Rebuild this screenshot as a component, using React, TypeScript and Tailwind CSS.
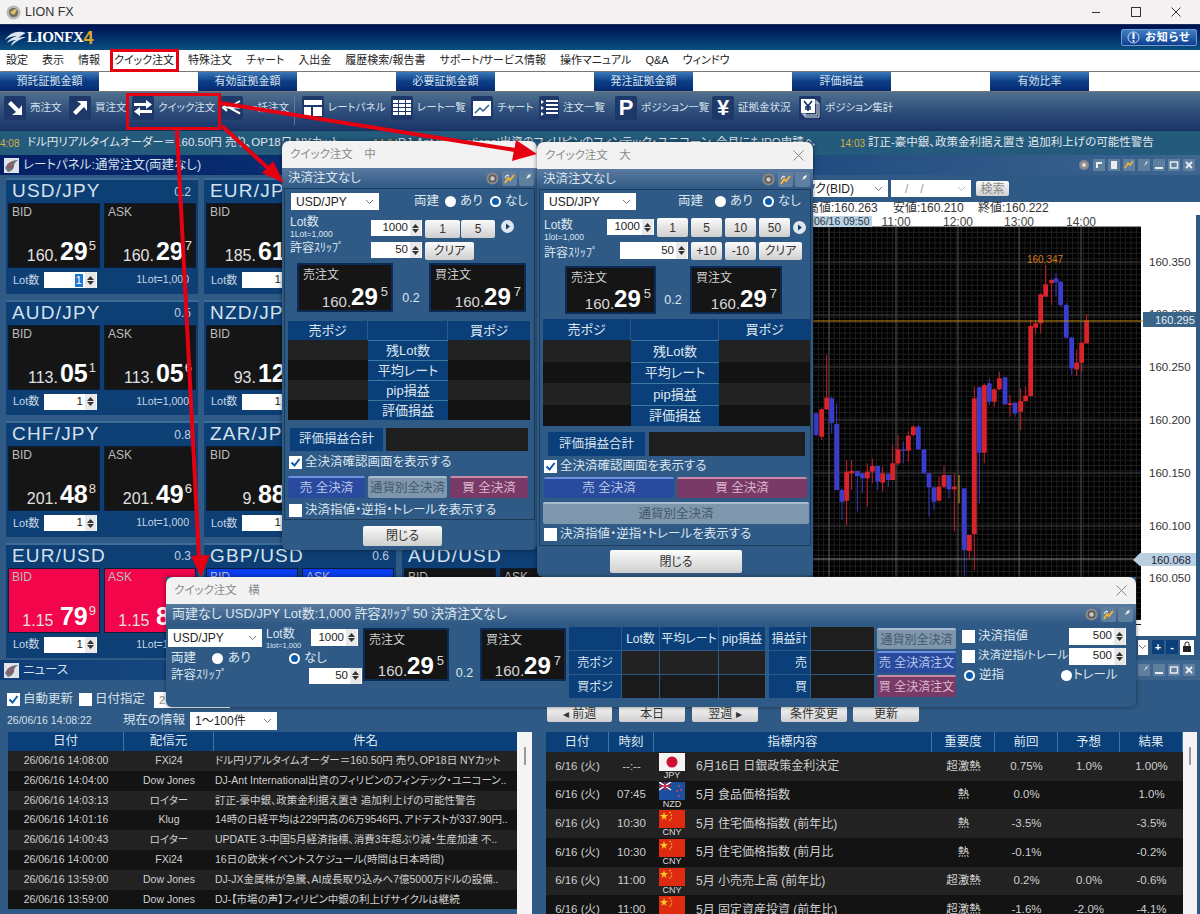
import React from 'react';

// candles: x, body top, body bottom, wick top, wick bottom (zoomed chart coords), red?
const candles: [number, number, number, number, number, boolean][] = [
  [18, 730, 795, 730, 800, false], [35, 718, 800, 715, 810, true], [50, 683, 718, 555, 720, true],
  [65, 685, 758, 680, 790, false], [80, 762, 960, 700, 960, false], [96, 960, 995, 955, 1050, false],
  [110, 905, 992, 870, 1065, true], [125, 903, 910, 870, 960, true], [142, 903, 918, 905, 1025, false],
  [157, 910, 925, 910, 970, false], [172, 905, 925, 880, 1010, true], [187, 888, 905, 865, 940, true],
  [203, 888, 935, 888, 960, false], [218, 910, 938, 890, 965, true], [235, 912, 930, 910, 950, false],
  [248, 880, 930, 825, 930, true], [264, 838, 880, 795, 885, true], [280, 838, 842, 815, 880, false],
  [295, 797, 842, 785, 875, true], [310, 770, 795, 765, 800, true], [325, 770, 838, 765, 840, false],
  [342, 838, 910, 838, 910, false], [357, 910, 952, 910, 1040, false], [372, 952, 995, 950, 1020, false],
  [387, 950, 992, 920, 995, true], [402, 915, 950, 888, 955, true], [417, 915, 958, 915, 985, false],
  [433, 950, 958, 910, 1085, true], [463, 955, 1140, 955, 1220, false], [478, 1095, 1143, 1095, 1165, true],
  [493, 685, 1092, 650, 1200, true], [508, 652, 848, 650, 1000, false], [523, 645, 848, 640, 880, true],
  [538, 640, 695, 625, 705, false], [553, 658, 695, 655, 710, true], [568, 625, 658, 605, 660, true],
  [585, 622, 703, 620, 705, false], [600, 700, 705, 675, 740, true], [615, 698, 730, 698, 740, false],
  [632, 693, 725, 655, 780, true], [647, 677, 693, 650, 695, true], [662, 468, 678, 450, 680, true],
  [677, 460, 473, 450, 490, true], [692, 373, 460, 370, 490, true], [707, 343, 380, 285, 380, true],
  [725, 330, 340, 325, 405, true], [738, 325, 337, 310, 380, false], [752, 335, 405, 335, 410, false],
  [769, 405, 503, 400, 505, false], [785, 503, 595, 500, 615, false], [800, 578, 598, 540, 618, true],
  [815, 518, 578, 518, 605, true], [830, 452, 520, 432, 520, true],
];

const px = (z: number) => 810 + z / 3;
const py = (z: number) => 170 + z / 3;

function Chart() {
  const minorX = Array.from({ length: 62 }, (_, i) => 813 + i * 5.3);
  const minorY = Array.from({ length: 76 }, (_, i) => 227 + i * 5.3);
  const majorY = [262, 315, 367, 420, 473, 526, 578];
  const majorX = [829, 896, 958, 1019, 1081];
  const labels: [string, number][] = [
    ['160.350', 266], ['160.300', 318], ['160.250', 371], ['160.200', 424], ['160.150', 477], ['160.100', 530], ['160.050', 582],
  ];
  return (
    <svg width="383" height="421" viewBox="813 215 383 421" className="block shrink-0">
      <rect x="813" y="215" width="383" height="421" fill="#fff" />
      <rect x="813" y="227" width="328" height="393" fill="#000" />
      {minorX.map((x) => <line key={x} x1={x} x2={x} y1="227" y2="620" stroke="#1f1f1f" />)}
      {minorY.map((y) => <line key={y} x1="813" x2="1141" y1={y} y2={y} stroke="#1f1f1f" />)}
      {majorX.map((x) => <line key={x} x1={x} x2={x} y1="227" y2="620" stroke="#555" />)}
      {majorY.map((y) => <line key={y} x1="813" x2="1141" y1={y} y2={y} stroke="#444" />)}
      <rect x="813" y="216" width="59" height="11" fill="#b7d4e8" />
      <text x="814" y="225" fontSize="10.5" fill="#333">06/16 09:50</text>
      {[['11:00', 896], ['12:00', 958], ['13:00', 1019], ['14:00', 1081]].map(([t, x]) => (
        <text key={t} x={x} y="226" fontSize="12" fill="#444" textAnchor="middle">{t}</text>
      ))}
      {candles.map(([x, t, b, wt, wb, red]) => (
        <g key={x}>
          <line x1={px(x)} x2={px(x)} y1={py(wt)} y2={py(wb)} stroke={red ? '#c8202a' : '#3a3cc0'} />
          <rect x={px(x) - 2.4} y={py(t)} width="4.8" height={Math.max((b - t) / 3, 1.5)} fill={red ? '#d8232a' : '#3a3ccc'} />
        </g>
      ))}
      <line x1={px(447)} x2={px(447)} y1={py(915)} y2={py(1000)} stroke="#c8a020" />
      <line x1="813" x2="1143" y1="321" y2="321" stroke="#c98a10" />
      <line x1="813" x2="1135" y1="559" y2="559" stroke="#888" />
      <text x={px(705)} y="263" fontSize="10" fill="#d9791a" textAnchor="middle">160.347</text>
      {labels.map(([t, y]) => <text key={t} x="1149" y={y} fontSize="11.5" fill="#333">{t}</text>)}
      <rect x="1143" y="312" width="53" height="15" fill="#3a6488" />
      <text x="1155" y="324" fontSize="11" fill="#e6eef4">160.295</text>
      <path d="M1133 560 L1140 553 H1196 V566 H1140 Z" fill="#b9d0e2" />
      <text x="1151" y="563.5" fontSize="11" fill="#223">160.068</text>
    </svg>
  );
}

function Spin({ v, cls, picked }: { v: string; cls: string; picked?: boolean }) {
  return (
    <div className={`flex bg-white items-center justify-end text-[11.5px] text-[#222] shrink-0 ${cls}`}>
      <span className={picked ? 'mr-[2px] px-[1px] bg-[#1a78d8] text-white leading-[13px]' : 'pr-[2px]'}>{v}</span>
      <div className="w-[11px] h-full flex flex-col items-center justify-center gap-[1px] bg-[#e8e8e8] mr-[1px]">
        <svg width="7" height="4" viewBox="0 0 7 4"><path d="M3.5 0 7 4H0z" fill="#333" /></svg>
        <svg width="7" height="4" viewBox="0 0 7 4"><path d="M0 0h7L3.5 4z" fill="#333" /></svg>
      </div>
    </div>
  );
}

function Select({ v, cls }: { v: string; cls: string }) {
  return (
    <div className={`flex items-center justify-between bg-white text-[12px] text-[#222] pl-[5px] pr-[5px] shrink-0 ${cls}`}>
      <span className="whitespace-nowrap">{v}</span>
      <svg width="9" height="6" viewBox="0 0 9 6"><path d="M1 1l3.5 3.5L8 1" fill="none" stroke="#777" /></svg>
    </div>
  );
}

function Btn({ children, cls }: { children: React.ReactNode; cls: string }) {
  return (
    <div className={`flex items-center justify-center rounded-[2px] bg-gradient-to-b from-[#fbfbfb] to-[#cfcfcf] text-[#333] text-[12px] shrink-0 ${cls}`}>
      {children}
    </div>
  );
}

function Radio({ on, cls = '' }: { on?: boolean; cls?: string }) {
  return (
    <span className={`inline-flex w-[11px] h-[11px] rounded-full bg-white items-center justify-center shrink-0 ${cls}`}>
      {on && <span className="w-[7px] h-[7px] rounded-full bg-[#0a5cb0]" />}
    </span>
  );
}

function Check({ on }: { on?: boolean }) {
  return (
    <span className="inline-flex w-[13px] h-[13px] bg-white items-center justify-center shrink-0">
      {on && (
        <svg width="11" height="11" viewBox="0 0 11 11"><path d="M1.5 5.5l3 3 5-6.5" fill="none" stroke="#0a5cb0" strokeWidth="2" /></svg>
      )}
    </span>
  );
}

function Play() {
  return (
    <svg width="13" height="13" viewBox="0 0 13 13" className="shrink-0">
      <circle cx="6.5" cy="6.5" r="6.5" fill="#dfe6ee" />
      <path d="M5 3.5l4 3-4 3z" fill="#0a3f7a" />
    </svg>
  );
}

function DlgIcons() {
  return (
    <div className="flex gap-[2px]">
      <svg width="15" height="15" viewBox="0 0 15 15"><circle cx="7.5" cy="7.5" r="6" fill="#8a8a8a" /><circle cx="7.5" cy="7.5" r="4" fill="#5c5c5c" /><circle cx="7.5" cy="7.5" r="2.2" fill="#c8c8c8" /></svg>
      <svg width="15" height="15" viewBox="0 0 15 15"><rect width="15" height="15" rx="2" fill="#5f7f9f" /><path d="M3 12l3-5 2 2 4-5" fill="none" stroke="#f2b23a" strokeWidth="2" /><path d="M3 7l2-3 2 1" fill="none" stroke="#fff" /></svg>
      <svg width="15" height="15" viewBox="0 0 15 15"><rect width="15" height="15" rx="2" fill="#5f7f9f" /><path d="M3 12l4-4 2-4 3-1-1 3-4 2z" fill="#e8eef4" /></svg>
    </div>
  );
}

function PriceBig({ sup }: { sup: string }) {
  return (
    <div className="flex items-start justify-end leading-none">
      <span className="text-[15px] text-[#d8d8d8] mt-[9px]">160.</span>
      <span className="text-[24px] font-bold text-white">29</span>
      <span className="text-[13px] text-[#d8d8d8] ml-[3px]">{sup}</span>
    </div>
  );
}

function OrderBox({ label, sup, cls }: { label: string; sup: string; cls: string }) {
  return (
    <div className={`flex flex-col justify-between bg-[#151515] border-2 border-[#0b2a55] pl-[4px] pr-[3px] pt-[2px] pb-[1px] shrink-0 ${cls}`}>
      <span className="text-[12px] text-[#cfcfcf] leading-[16px]">{label}</span>
      <PriceBig sup={sup} />
    </div>
  );
}

const posRows = ['残Lot数', '平均レート', 'pip損益', '評価損益'];

function PosTable({ cols, head, row }: { cols: string; head: string; row: string }) {
  return (
    <div className={`grid ${cols} text-[13px] text-[#dfe8f0]`}>
      <div className={`${head} bg-[#0a3f7a] border-r border-[#2f5a85] flex items-center justify-center`}>売ポジ</div>
      <div className={`${head} bg-[#0a3f7a] border-r border-[#2f5a85]`} />
      <div className={`${head} bg-[#0a3f7a] flex items-center justify-center`}>買ポジ</div>
      {posRows.map((t, i) => (
        <React.Fragment key={t}>
          <div className={`${row} ${i % 2 ? 'bg-[#131313]' : 'bg-[#222]'}`} />
          <div className={`${row} bg-[#0a3f7a] border-t border-[#3a7aa0] flex items-center justify-center`}>{t}</div>
          <div className={`${row} ${i % 2 ? 'bg-[#131313]' : 'bg-[#222]'}`} />
        </React.Fragment>
      ))}
    </div>
  );
}

function SettleBtn({ children, tone, cls }: { children: React.ReactNode; tone: 'blue' | 'red' | 'gray'; cls: string }) {
  const t = tone === 'blue'
    ? 'bg-[#2a4a9e] border-[#6f8fe0] text-[#b9c8ec]'
    : tone === 'red'
      ? 'bg-[#7a3a68] border-[#c88aa8] text-[#dcb9cc]'
      : 'bg-[#7e97ad] border-[#a8bccb] text-[#46566a]';
  return <div className={`flex items-center justify-center rounded-[2px] border-t-2 text-[12.5px] shrink-0 ${t} ${cls}`}>{children}</div>;
}

function DialogTitle({ t, close }: { t: string; close?: boolean }) {
  return (
    <div className="flex items-center justify-between h-[27px] bg-[#f2f2f2] rounded-t-[7px] pl-[8px] pr-[9px] text-[11.5px] text-[#8a8a8a] shrink-0">
      <span>{t}</span>
      {close && (
        <svg width="11" height="11" viewBox="0 0 11 11"><path d="M.5.5l10 10M10.5.5l-10 10" stroke="#8a8a8a" /></svg>
      )}
    </div>
  );
}

function DialogMedium() {
  return (
    <div className="absolute left-[282px] top-[141px] w-[255px] h-[409px] flex flex-col rounded-b-[6px] bg-[#2f5a85] text-[#dbe6f0] text-[12.5px] shadow-[0_0_4px_rgba(0,0,0,0.5)]">
      <DialogTitle t="クイック注文　中" />
      <div className="flex items-center justify-between h-[20px] px-[6px] pr-[3px] bg-gradient-to-b from-[#5a7aa0] to-[#2f5a85] shrink-0">
        <span>決済注文なし</span>
        <DlgIcons />
      </div>
      <div className="mx-[2px] h-[332px] border border-[#1d3c5a] flex flex-col px-[4px] pt-[4px]">
        <div className="flex items-center h-[17px]">
          <Select v="USD/JPY" cls="w-[88px] h-[17px] ml-[2px]" />
          <span className="ml-[35px] w-[31px]">両建</span>
          <Radio />
          <span className="ml-[4px] w-[30px]">あり</span>
          <Radio on />
          <span className="ml-[4px]">なし</span>
        </div>
        <div className="flex mt-[10px] h-[38px]">
          <div className="w-[81px] ml-[1px] leading-none -mt-[5px]">
            <div className="text-[12px] leading-[14px]">Lot数</div>
            <div className="text-[8.5px] leading-[10px]">1Lot=1,000</div>
            <div className="text-[12px] leading-[16px] mt-[1px]">許容ｽﾘｯﾌﾟ</div>
          </div>
          <div className="flex flex-col gap-[6px]">
            <div className="flex items-start">
              <Spin v="1000" cls="w-[51px] h-[16px]" />
              <Btn cls="w-[35px] h-[18px] ml-[3px]">1</Btn>
              <Btn cls="w-[34px] h-[18px] ml-[1px]">5</Btn>
              <span className="ml-[6px]"><Play /></span>
            </div>
            <div className="flex items-start -mt-[2px]">
              <Spin v="50" cls="w-[51px] h-[16px]" />
              <Btn cls="w-[49px] h-[18px] ml-[3px]">クリア</Btn>
            </div>
          </div>
        </div>
        <div className="flex items-end mt-[5px] ml-[8px] h-[49px]">
          <OrderBox label="売注文" sup="5" cls="w-[96px] h-[49px]" />
          <span className="w-[36px] text-center text-[12.5px] mb-[4px]">0.2</span>
          <OrderBox label="買注文" sup="7" cls="w-[97px] h-[49px]" />
        </div>
        <div className="mt-[9px] -mx-[1px]">
          <PosTable cols="grid-cols-[80px_80px_82px]" head="h-[19px]" row="h-[20px]" />
        </div>
        <div className="flex mt-[8px] ml-[1px] h-[23px]">
          <div className="w-[93px] bg-[#0a3f7a] flex items-center justify-center">評価損益合計</div>
          <div className="w-[142px] ml-[3px] bg-[#1e1e1e]" />
        </div>
        <div className="flex items-center gap-[3px] mt-[4px] h-[14px]"><Check on /><span>全決済確認画面を表示する</span></div>
        <div className="flex gap-[3px] mt-[7px] -ml-[1px]">
          <SettleBtn tone="blue" cls="w-[77px] h-[22px]">売 全決済</SettleBtn>
          <SettleBtn tone="gray" cls="w-[79px] h-[22px]">通貨別全決済</SettleBtn>
          <SettleBtn tone="red" cls="w-[78px] h-[22px]">買 全決済</SettleBtn>
        </div>
        <div className="flex items-center gap-[3px] mt-[5px] h-[14px]"><Check /><span>決済指値・逆指・トレールを表示する</span></div>
      </div>
      <Btn cls="w-[79px] h-[20px] ml-[81px] mt-[6px]">閉じる</Btn>
    </div>
  );
}

function DialogLarge() {
  return (
    <div className="absolute left-[537px] top-[142px] w-[276px] h-[435px] flex flex-col rounded-b-[6px] bg-[#2f5a85] text-[#dbe6f0] text-[12.5px] shadow-[0_0_4px_rgba(0,0,0,0.5)]">
      <DialogTitle t="クイック注文　大" close />
      <div className="flex items-center justify-between h-[20px] px-[6px] pr-[3px] bg-gradient-to-b from-[#5a7aa0] to-[#2f5a85] shrink-0">
        <span>決済注文なし</span>
        <DlgIcons />
      </div>
      <div className="mx-[2px] h-[357px] border border-[#1d3c5a] flex flex-col px-[4px] pt-[3px]">
        <div className="flex items-center h-[17px]">
          <Select v="USD/JPY" cls="w-[92px] h-[17px]" />
          <span className="ml-[42px] w-[37px]">両建</span>
          <Radio />
          <span className="ml-[4px] w-[33px]">あり</span>
          <Radio on />
          <span className="ml-[4px]">なし</span>
        </div>
        <div className="flex mt-[8px] h-[42px]">
          <div className="w-[66px] leading-none">
            <div className="text-[12px] leading-[14px]">Lot数</div>
            <div className="text-[8.5px] leading-[10px]">1lot=1,000</div>
            <div className="text-[12px] leading-[16px] mt-[3px]">許容ｽﾘｯﾌﾟ</div>
          </div>
          <div className="flex flex-col gap-[5px]">
            <div className="flex items-start">
              <Spin v="1000" cls="w-[47px] h-[16px] mt-[1px]" />
              <Btn cls="w-[31px] h-[19px] ml-[3px]">1</Btn>
              <Btn cls="w-[31px] h-[19px] ml-[3px]">5</Btn>
              <Btn cls="w-[31px] h-[19px] ml-[3px]">10</Btn>
              <Btn cls="w-[31px] h-[19px] ml-[3px]">50</Btn>
              <span className="ml-[3px] mt-[3px]"><Play /></span>
            </div>
            <div className="flex items-start">
              <Spin v="50" cls="w-[68px] h-[17px] ml-[13px]" />
              <Btn cls="w-[31px] h-[18px] ml-[3px]">+10</Btn>
              <Btn cls="w-[31px] h-[18px] ml-[3px]">-10</Btn>
              <Btn cls="w-[43px] h-[18px] ml-[3px]">クリア</Btn>
            </div>
          </div>
        </div>
        <div className="flex items-end mt-[6px] ml-[21px] h-[48px]">
          <OrderBox label="売注文" sup="5" cls="w-[91px] h-[48px]" />
          <span className="w-[34px] text-center text-[12.5px] mb-[4px]">0.2</span>
          <OrderBox label="買注文" sup="7" cls="w-[92px] h-[48px]" />
        </div>
        <div className="mt-[5px] -mx-[1px]">
          <PosTable cols="grid-cols-[88px_88px_91px]" head="h-[21px]" row="h-[21.5px]" />
        </div>
        <div className="flex mt-[6px] ml-[4px] h-[24px]">
          <div className="w-[97px] bg-[#0a3f7a] flex items-center justify-center">評価損益合計</div>
          <div className="w-[156px] ml-[4px] bg-[#1e1e1e]" />
        </div>
        <div className="flex items-center gap-[3px] mt-[3px] h-[14px]"><Check on /><span>全決済確認画面を表示する</span></div>
        <div className="flex gap-[3px] mt-[4px]">
          <SettleBtn tone="blue" cls="w-[130px] h-[21px]">売 全決済</SettleBtn>
          <SettleBtn tone="red" cls="w-[130px] h-[21px]">買 全決済</SettleBtn>
        </div>
        <SettleBtn tone="gray" cls="w-[266px] h-[22px] mt-[4px] -ml-[1px]">通貨別全決済</SettleBtn>
        <div className="flex items-center gap-[3px] mt-[3px] h-[14px]"><Check /><span>決済指値・逆指・トレールを表示する</span></div>
      </div>
      <Btn cls="w-[132px] h-[23px] ml-[73px] mt-[4px]">閉じる</Btn>
    </div>
  );
}

function HCell({ children, cls }: { children?: React.ReactNode; cls: string }) {
  return <div className={`flex items-center justify-center border-r border-b border-[#2f5a85] text-[12px] text-[#dfe8f0] ${cls}`}>{children}</div>;
}

function DialogWide() {
  return (
    <div className="absolute left-[166px] top-[577px] w-[970px] h-[130px] flex flex-col rounded-b-[6px] bg-[#2f5a85] text-[#dbe6f0] text-[12.5px] shadow-[0_0_4px_rgba(0,0,0,0.5)]">
      <DialogTitle t="クイック注文　横" close />
      <div className="flex items-center justify-between h-[20px] pl-[6px] pr-[3px] bg-gradient-to-b from-[#5a7aa0] to-[#2f5a85] shrink-0">
        <span className="text-[13px]">両建なし USD/JPY Lot数:1,000 許容ｽﾘｯﾌﾟ50 決済注文なし</span>
        <DlgIcons />
      </div>
      <div className="flex pl-[2px] pt-[4px]">
        <div className="w-[195px] flex flex-col shrink-0">
          <div className="flex h-[21px]">
            <Select v="USD/JPY" cls="w-[94px] h-[18px] mt-[1px]" />
            <div className="ml-[4px] w-[45px] leading-none">
              <div className="text-[12px] leading-[13px]">Lot数</div>
              <div className="text-[7.5px] leading-[9px]">1lot=1,000</div>
            </div>
            <Spin v="1000" cls="w-[47px] h-[17px] mt-[1px]" />
          </div>
          <div className="flex items-center h-[18px] pl-[3px]">
            <span className="w-[41px]">両建</span>
            <Radio />
            <span className="ml-[5px] w-[61px]">あり</span>
            <Radio on />
            <span className="ml-[4px]">なし</span>
          </div>
          <div className="flex items-center justify-between h-[17px] pl-[3px] pr-[1px]">
            <span>許容ｽﾘｯﾌﾟ</span>
            <Spin v="50" cls="w-[53px] h-[16px]" />
          </div>
        </div>
        <OrderBox label="売注文" sup="5" cls="w-[86px] h-[53px]" />
        <div className="w-[31px] h-[53px] flex items-end justify-center pb-[2px] leading-none">0.2</div>
        <OrderBox label="買注文" sup="7" cls="w-[86px] h-[53px]" />
        <div className="grid grid-cols-[53px_38px_59px_47px] grid-rows-[24px_24px_24px] ml-[3px] -mt-[1px] bg-[#0a3f7a]">
          <HCell cls="bg-[#0a3f7a]" />
          <HCell cls="bg-[#0a3f7a]">Lot数</HCell>
          <HCell cls="bg-[#0a3f7a]">平均レート</HCell>
          <HCell cls="bg-[#0a3f7a]">pip損益</HCell>
          <HCell cls="bg-[#0a3f7a]">売ポジ</HCell>
          <HCell cls="bg-[#222]" /><HCell cls="bg-[#222]" /><HCell cls="bg-[#222]" />
          <HCell cls="bg-[#0a3f7a]">買ポジ</HCell>
          <HCell cls="bg-[#1a1a1a]" /><HCell cls="bg-[#1a1a1a]" /><HCell cls="bg-[#1a1a1a]" />
        </div>
        <div className="grid grid-cols-[42px_64px] grid-rows-[24px_24px_24px] ml-[3px] -mt-[1px]">
          <HCell cls="bg-[#0a3f7a]">損益計</HCell><HCell cls="bg-[#1e1e1e]" />
          <HCell cls="bg-[#0a3f7a] !justify-end pr-[3px]">売</HCell><HCell cls="bg-[#1a1a1a]" />
          <HCell cls="bg-[#0a3f7a] !justify-end pr-[3px]">買</HCell><HCell cls="bg-[#1a1a1a]" />
        </div>
        <div className="flex flex-col gap-[2px] ml-[2px] w-[79px] shrink-0">
          <SettleBtn tone="gray" cls="w-[79px] h-[21px] text-[12px]">通貨別全決済</SettleBtn>
          <SettleBtn tone="blue" cls="w-[79px] h-[22px] text-[12px]">売 全決済注文</SettleBtn>
          <SettleBtn tone="red" cls="w-[79px] h-[22px] text-[12px]">買 全決済注文</SettleBtn>
        </div>
        <div className="flex flex-col ml-[6px] w-[164px] shrink-0 -mt-[1px]">
          <div className="flex items-center h-[18px]"><Check /><span className="ml-[3px] w-[91px]">決済指値</span><Spin v="500" cls="w-[57px] h-[17px]" /></div>
          <div className="flex items-center h-[18px] mt-[2px]"><Check /><span className="ml-[3px] w-[91px] whitespace-nowrap text-[11.5px]">決済逆指/トレール</span><Spin v="500" cls="w-[57px] h-[17px]" /></div>
          <div className="flex items-center h-[18px] mt-[1px] pl-[2px]">
            <Radio on /><span className="ml-[4px] w-[82px]">逆指</span>
            <Radio /><span className="ml-[1px]">トレール</span>
          </div>
        </div>
      </div>
    </div>
  );
}

type Card = { pair: string; spread: string; bid: [string, string, string]; ask: [string, string, string]; box?: string };

// null = card that sits wholly behind the order dialogs
const cards: (Card | null)[] = [
  { pair: 'USD/JPY', spread: '0.2', bid: ['160.', '29', '5'], ask: ['160.', '29', '7'] },
  { pair: 'EUR/JPY', spread: '0.4', bid: ['185.', '61', '2'], ask: ['185.', '61', '6'] },
  null,
  { pair: 'AUD/JPY', spread: '0.5', bid: ['113.', '05', '1'], ask: ['113.', '05', '6'] },
  { pair: 'NZD/JPY', spread: '0.9', bid: ['93.', '12', '3'], ask: ['93.', '13', '2'] },
  null,
  { pair: 'CHF/JPY', spread: '0.8', bid: ['201.', '48', '8'], ask: ['201.', '49', '6'] },
  { pair: 'ZAR/JPY', spread: '0.9', bid: ['9.', '88', '1'], ask: ['9.', '89', '0'] },
  null,
  { pair: 'EUR/USD', spread: '0.3', bid: ['1.15 ', '79', '9'], ask: ['1.15 ', '80', '2'], box: 'bg-[#f2054a]' },
  { pair: 'GBP/USD', spread: '0.6', bid: ['1.33 ', '42', '1'], ask: ['1.33 ', '42', '7'], box: 'bg-[#0a3cf0]' },
  { pair: 'AUD/USD', spread: '0.5', bid: ['0.70 ', '51', '2'], ask: ['0.70 ', '51', '7'] },
];

function PriceBox({ label, p, box }: { label: string; p: [string, string, string]; box?: string }) {
  return (
    <div className={`flex-1 h-[65px] flex flex-col justify-between pl-[3px] pr-[3px] pb-[3px] border border-[#0a1e3a] ${box ?? 'bg-[#151515]'}`}>
      <span className="text-[12px] leading-[16px] text-[#bdbdbd]">{label}</span>
      <div className="flex items-start justify-end leading-none">
        <span className="text-[16px] text-[#e0e0e0] mt-[9px] whitespace-pre">{p[0]}</span>
        <span className="text-[25px] font-bold text-white ml-[2px]">{p[1]}</span>
        <span className="text-[13px] text-[#e0e0e0] ml-[1px]">{p[2]}</span>
      </div>
    </div>
  );
}

function RateCard({ c, first }: { c: Card; first?: boolean }) {
  return (
    <div className="h-[115.5px] bg-[#0d3f75] border-t-2 border-[#3d6c97] flex flex-col">
      <div className="flex items-center justify-between h-[23px] px-[6px] shrink-0">
        <span className="text-[19px] text-[#d4e2ee] tracking-[1.2px]">{c.pair}</span>
        <span className="text-[12px] text-[#c0d0e0] pr-[1px]">{c.spread}</span>
      </div>
      <div className="flex gap-[4px] px-[2px]">
        <PriceBox label="BID" p={c.bid} box={c.box} />
        <PriceBox label="ASK" p={c.ask} box={c.box} />
      </div>
      <div className="flex items-center h-[24px] pl-[7px] pr-[9px] text-[11px] text-[#c8d6e4] justify-between">
        <div className="flex items-center">
          <span className="w-[31px]">Lot数</span>
          <Spin v="1" picked={first} cls="w-[53px] h-[16px]" />
        </div>
        <span className="text-[10.5px]">1Lot=1,000</span>
      </div>
    </div>
  );
}

function PanelIcon() {
  return (
    <svg width="15" height="15" viewBox="0 0 15 15" className="shrink-0">
      <rect width="15" height="15" fill="#dfe4ea" />
      <path d="M1 10c3-6 8-8 13-8-3 2-4 4-4 6s-2 5-6 6z" fill="#6a7480" />
      <path d="M3 7l6-3M4 10l6-2" stroke="#c43a3a" />
    </svg>
  );
}

function WinBtns({ full }: { full?: boolean }) {
  return (
    <div className="flex gap-[3px] items-center">
      {full && (
        <>
          <svg width="12" height="12" viewBox="0 0 12 12"><circle cx="6" cy="6" r="5" fill="#8a8a8a" /><circle cx="6" cy="6" r="2" fill="#ddd" /></svg>
          <svg width="12" height="12" viewBox="0 0 12 12"><rect width="12" height="12" fill="#5f7f9f" /><path d="M3 3h6v2H5v4H3z" fill="#e8eef4" /></svg>
          <svg width="12" height="12" viewBox="0 0 12 12"><rect width="12" height="12" fill="#5f7f9f" /><rect x="3" y="2" width="6" height="8" fill="#e8eef4" /></svg>
          <svg width="12" height="12" viewBox="0 0 12 12"><rect width="12" height="12" fill="#5f7f9f" /><path d="M2 9l3-5 2 2 3-4" fill="none" stroke="#f2b23a" strokeWidth="1.5" /></svg>
        </>
      )}
      <svg width="12" height="12" viewBox="0 0 12 12"><rect width="12" height="12" fill="#5f7f9f" /><path d="M2 10l4-3 2-4 2-1-1 2-3 3z" fill="#e8eef4" /></svg>
      <svg width="12" height="12" viewBox="0 0 12 12"><rect width="12" height="12" fill="#5f7f9f" /><rect x="2" y="8" width="8" height="2" fill="#e8eef4" /></svg>
      <svg width="12" height="12" viewBox="0 0 12 12"><rect width="12" height="12" fill="#5f7f9f" /><rect x="2.5" y="3" width="7" height="6" fill="none" stroke="#e8eef4" strokeWidth="1.5" /></svg>
      <svg width="12" height="12" viewBox="0 0 12 12"><rect width="12" height="12" fill="#5f7f9f" /><path d="M3 3l6 6M9 3l-6 6" stroke="#e8eef4" strokeWidth="1.8" /></svg>
    </div>
  );
}

const IconSell = () => <svg width="20" height="20" viewBox="0 0 20 20"><path d="M3 6l3-3 8 8 3-4v10H7l4-3z" fill="#fff" /></svg>;
const IconBuy = () => <svg width="20" height="20" viewBox="0 0 20 20"><path d="M3 14l3 3 8-8 3 4V3H7l4 3z" fill="#fff" /></svg>;
const IconQuick = () => <svg width="20" height="20" viewBox="0 0 20 20"><path d="M1 5h12V2l6 4.5L13 11V8H1zM19 12H7V9l-6 4.5L7 18v-3h12z" fill="#fff" /></svg>;
const IconBulk = () => <svg width="20" height="20" viewBox="0 0 20 20"><path d="M18 3L7 9.500l11 6M3 9.500h15" fill="none" stroke="#fff" strokeWidth="2" /><path d="M5 6L1 9.500 5 13" fill="none" stroke="#fff" strokeWidth="2" /></svg>;
const IconPanel = () => <svg width="20" height="20" viewBox="0 0 20 20"><path d="M1 2h18v5H1zM1 9h7v9H1zM10 9h9v9h-9z" fill="#fff" /></svg>;
const IconGrid = () => <svg width="20" height="20" viewBox="0 0 20 20"><path d="M1 2h5v3H1zM7 2h6v3H7zM14 2h5v3h-5zM1 6h5v3H1zM7 6h6v3H7zM14 6h5v3h-5zM1 10h5v3H1zM7 10h6v3H7zM14 10h5v3h-5zM1 14h5v3H1zM7 14h6v3H7zM14 14h5v3h-5z" fill="#fff" /></svg>;
const IconChart = () => <svg width="20" height="20" viewBox="0 0 20 20"><rect x="1" y="3" width="18" height="15" fill="#fff" /><path d="M3 15l5-5 3 3 6-6" fill="none" stroke="#2a5a8a" strokeWidth="1.5" /></svg>;
const IconList = () => <svg width="18" height="20" viewBox="0 0 18 20"><path d="M6 2h12v2H6zM6 6h12v2H6zM6 10h12v2H6zM6 14h12v2H6zM1 2l3 2-3 2zM1 8l3 2-3 2zM1 14l3 2-3 2z" fill="#fff" /></svg>;
const IconSum = () => (
  <svg width="20" height="20" viewBox="0 0 20 20">
    <path d="M5 5h14v14H5z" fill="none" stroke="#ddd" />
    <path d="M3 3h14v14H3z" fill="none" stroke="#ddd" />
    <rect x="1" y="1" width="14" height="14" fill="#fff" />
    <path d="M4 3l4 5 4-5M8 8v5M5 9h6M5 11h6" fill="none" stroke="#0a2a55" strokeWidth="1.500" />
  </svg>
);

const toolItems: { w: string; icon: React.ReactNode; t: string }[] = [
  { w: 'w-[65px]', icon: <IconSell />, t: '売注文' },
  { w: 'w-[63px]', icon: <IconBuy />, t: '買注文' },
  { w: 'w-[89px]', icon: <IconQuick />, t: 'クイック注文' },
  { w: 'w-[73px]', icon: <IconBulk />, t: '一括注文' },
];
const toolItems2: { w: string; icon: React.ReactNode; t: string }[] = [
  { w: 'w-[89px]', icon: <IconPanel />, t: 'レートパネル' },
  { w: 'w-[80px]', icon: <IconGrid />, t: 'レート一覧' },
  { w: 'w-[68px]', icon: <IconChart />, t: 'チャート' },
  { w: 'w-[76px]', icon: <IconList />, t: '注文一覧' },
  { w: 'w-[97px]', icon: <span className="w-[20px] text-center text-[22px] font-bold text-white leading-none">P</span>, t: 'ポジション一覧' },
  { w: 'w-[87px]', icon: <span className="w-[20px] text-center text-[22px] font-bold text-white leading-none">¥</span>, t: '証拠金状況' },
  { w: 'w-[100px]', icon: <IconSum />, t: 'ポジション集計' },
];

function ToolItem({ w, icon, t }: { w: string; icon: React.ReactNode; t: string }) {
  return (
    <div className={`flex items-center gap-[5px] shrink-0 ${w}`}>
      <span className="flex items-center justify-center bg-[#1d3869] rounded-[2px] h-[24px] -mx-[1px] px-[1px]">{icon}</span>
      <span className="whitespace-nowrap">{t}</span>
    </div>
  );
}

const menu = ['設定', '表示', '情報', 'クイック注文', '特殊注文', 'チャート', '入出金', '履歴検索/報告書', 'サポート/サービス情報', '操作マニュアル', 'Q&A', 'ウィンドウ'];
const margins = ['預託証拠金額', '有効証拠金額', '必要証拠金額', '発注証拠金額', '評価損益', '有効比率'];

const news = [
  ['26/06/16 14:08:00', 'FXi24', 'ドル円リアルタイムオーダー＝160.50円 売り、OP18日 NYカット'],
  ['26/06/16 14:04:00', 'Dow Jones', 'DJ-Ant International出資のフィリピンのフィンテック・ユニコーン..'],
  ['26/06/16 14:03:13', 'ロイター', '訂正-豪中銀、政策金利据え置き 追加利上げの可能性警告'],
  ['26/06/16 14:01:16', 'Klug', '14時の日経平均は229円高の6万9546円、アドテストが337.90円..'],
  ['26/06/16 14:00:43', 'ロイター', 'UPDATE 3-中国5月経済指標、消費3年超ぶり減・生産加速 不..'],
  ['26/06/16 14:00:00', 'FXi24', '16日の欧米イベントスケジュール(時間は日本時間)'],
  ['26/06/16 13:59:00', 'Dow Jones', 'DJ-JX金属株が急騰、AI成長取り込みへ7億5000万ドルの設備..'],
  ['26/06/16 13:59:00', 'Dow Jones', 'DJ-【市場の声】フィリピン中銀の利上げサイクルは継続'],
];

const calendar = [
  ['6/16 (火)', '--:--', 'JPY', '6月16日 日銀政策金利決定', '超激熱', '0.75%', '1.0%', '1.00%'],
  ['6/16 (火)', '07:45', 'NZD', '5月 食品価格指数', '熱', '0.0%', '', '1.0%'],
  ['6/16 (火)', '10:30', 'CNY', '5月 住宅価格指数 (前年比)', '熱', '-3.5%', '', '-3.5%'],
  ['6/16 (火)', '10:30', 'CNY', '5月 住宅価格指数 (前月比', '熱', '-0.1%', '', '-0.2%'],
  ['6/16 (火)', '11:00', 'CNY', '5月 小売売上高 (前年比)', '超激熱', '0.2%', '0.0%', '-0.6%'],
  ['6/16 (火)', '11:00', 'CNY', '5月 固定資産投資 (前年比)', '超激熱', '-1.6%', '-2.0%', '-4.1%'],
];

function Flag({ c }: { c: string }) {
  if (c === 'JPY') {
    return <svg width="26" height="18" viewBox="0 0 26 18"><rect width="26" height="18" fill="#f4f4f4" /><circle cx="13" cy="9" r="5.500" fill="#d01030" /></svg>;
  }
  if (c === 'NZD') {
    return (
      <svg width="26" height="18" viewBox="0 0 26 18">
        <rect width="26" height="18" fill="#1a4fa0" />
        <rect width="12" height="8" fill="#2a3f7a" />
        <path d="M0 0l12 8M12 0L0 8" stroke="#fff" strokeWidth="1.500" />
        <path d="M6 0v8M0 4h12" stroke="#d02040" strokeWidth="1.500" />
        <circle cx="20" cy="4" r="1" fill="#e04050" /><circle cx="18" cy="9" r="1" fill="#e04050" /><circle cx="22" cy="8" r="1" fill="#e04050" /><circle cx="20" cy="14" r="1" fill="#e04050" />
      </svg>
    );
  }
  return (
    <svg width="26" height="18" viewBox="0 0 26 18">
      <rect width="26" height="18" fill="#de2a10" />
      <path d="M5 2l1 3h3l-2.500 2 1 3L5 8 2.500 10l1-3L1 5h3z" fill="#f5d020" />
      <circle cx="11" cy="2.500" r=".8" fill="#f5d020" /><circle cx="12.500" cy="5" r=".8" fill="#f5d020" /><circle cx="12.500" cy="8" r=".8" fill="#f5d020" /><circle cx="11" cy="10" r=".8" fill="#f5d020" />
    </svg>
  );
}

function Scrollbar({ cls }: { cls: string }) {
  return (
    <div className={`bg-[#f4f4f4] flex justify-center shrink-0 ${cls}`}>
      <div className="w-[2px] h-[18px] bg-[#999] mt-[15px]" />
    </div>
  );
}

export default function App() {
  return (
    <div className="relative w-[1200px] h-[914px] overflow-hidden flex flex-col bg-[#2f5a85] font-['Liberation_Sans','Noto_Sans_CJK_JP',sans-serif] [font-feature-settings:'palt']">
      {/* window title */}
      <div className="flex items-center h-[24px] bg-gradient-to-r from-[#f4f1f3] to-[#f5f0f2] shrink-0">
        <svg width="15" height="15" viewBox="0 0 15 15" className="ml-[6px]">
          <circle cx="7.5" cy="7.500" r="7" fill="#b8b8b8" />
          <circle cx="7.5" cy="7.500" r="4.500" fill="#6f6a55" />
          <path d="M4 8c2-3 4-4 7-4-1 2-1 4-3 6z" fill="#d8c070" />
        </svg>
        <span className="ml-[4px] text-[12.500px] text-[#333]">LION FX</span>
        <div className="flex items-center ml-auto">
          <svg width="12" height="12" viewBox="0 0 12 12" className="mr-[28px]"><path d="M2 6.500h8" stroke="#333" /></svg>
          <svg width="12" height="12" viewBox="0 0 12 12" className="mr-[28px]"><rect x="1.500" y="1.500" width="9" height="9" fill="none" stroke="#333" /></svg>
          <svg width="12" height="12" viewBox="0 0 12 12" className="mr-[18px]"><path d="M1.500 1.500l9 9M10.500 1.500l-9 9" stroke="#333" /></svg>
        </div>
      </div>

      {/* logo bar */}
      <div className="flex items-center justify-between h-[26px] bg-gradient-to-b from-[#000f50] via-[#03306a] to-[#0c4f80] shrink-0 border-t border-[#1a2f5a]">
        <div className="flex items-center pl-[4px]">
          <svg width="23" height="18" viewBox="0 0 23 18">
            <path d="M22 4C14 1 6 3 1 11c4-3 7-4 12-4-4 1-8 3-10 7 3-2 6-3 9-3-2 1-4 2-5 6 4-4 9-7 15-9-4 0-6 0-8 1 3-2 5-4 8-5z" fill="#d8e4ee" />
          </svg>
          <span className="font-['Liberation_Serif',serif] font-bold text-[15px] text-white tracking-[-0.3px]">LIONFX</span>
          <span className="font-bold text-[18px] text-[#d8a92a] leading-none">4</span>
        </div>
        <div className="flex items-center gap-[5px] w-[76px] h-[17px] mr-[3px] rounded-[2px] bg-gradient-to-b from-[#3f7fc8] to-[#0f3f90] border border-[#6a9ad0] pl-[5px] text-[11px] font-bold text-white tracking-[1px]">
          <svg width="13" height="13" viewBox="0 0 13 13"><circle cx="6.500" cy="6.500" r="5.500" fill="none" stroke="#dde" /><path d="M6.500 2v6" stroke="#fff" strokeWidth="2" /><circle cx="6.500" cy="10" r="1" fill="#fff" /></svg>
          お知らせ
        </div>
      </div>

      {/* menu */}
      <div className="flex items-center h-[21px] bg-white pl-[6px] gap-[14px] text-[11px] text-[#222] shrink-0">
        {menu.map((m) => <span key={m}>{m}</span>)}
      </div>

      {/* margin strip */}
      <div className="flex h-[21px] bg-white shrink-0 border-y border-[#777]">
        {margins.map((m) => (
          <React.Fragment key={m}>
            <div className="w-[99px] flex items-center justify-center bg-gradient-to-b from-[#3a78b8] via-[#0c3d86] to-[#052a70] text-[11px] text-[#d7e2ee]">{m}</div>
            <div className="w-[99px]" />
          </React.Fragment>
        ))}
      </div>

      {/* toolbar */}
      <div className="flex items-center h-[38px] pl-[5px] pb-[6px] bg-gradient-to-b from-[#50708f] via-[#2f4f7c] to-[#1b3468] text-[10.5px] text-[#d5e0ea] shrink-0">
        {toolItems.map((it) => <ToolItem key={it.t} {...it} />)}
        <div className="w-px h-[30px] bg-[#5a7a9a] -mb-[4px] mr-[8px] ml-[-1px]" />
        {toolItems2.map((it) => <ToolItem key={it.t} {...it} />)}
      </div>

      {/* ticker */}
      <div className="flex items-center h-[25px] bg-[#245a7c] border-t border-[#16325a] text-[11.500px] text-[#e0e8ee] shrink-0 whitespace-nowrap overflow-hidden">
        <span className="text-[#d8b040] text-[10px] w-[27px] shrink-0">4:08</span>
        <span className="w-[346px] shrink-0">ドル円リアルタイムオーダー＝160.50円 売り、OP18日 NYカット</span>
        <span className="text-[#d8b040] text-[10px] w-[25px] shrink-0">14:04</span>
        <span className="w-[442px] shrink-0">DJ-Ant International出資のフィリピンのフィンテック・ユニコーン、今月にもIPO申請へ</span>
        <span className="text-[#d8b040] text-[10px] w-[28px] shrink-0">14:03</span>
        <span>訂正-豪中銀、政策金利据え置き 追加利上げの可能性警告</span>
      </div>

      {/* rate panel + chart */}
      <div className="flex h-[505px] shrink-0">
        <div className="w-[600px] flex flex-col shrink-0">
          <div className="flex items-center gap-[4px] h-[20px] pl-[4px] bg-gradient-to-r from-[#061f66] to-[#0f3d78] text-[12.500px] text-[#d5e0ea] shrink-0">
            <PanelIcon />
            <span>レートパネル:通常注文(両建なし)</span>
          </div>
          <div className="grid grid-cols-[192px_192px_192px] gap-x-[6px] gap-y-[6px] pl-[6px] pt-[3px]">
            {cards.map((c, i) => (c
              ? <RateCard key={c.pair} c={c} first={i === 0} />
              : <div key={i} className="h-[115.5px] bg-[#0d3f75]" />))}
          </div>
        </div>
        <div className="flex-1 flex flex-col min-w-0">
          <div className="flex items-center justify-end h-[20px] pr-[5px] bg-gradient-to-r from-[#0f3d78] to-[#3f6690] shrink-0">
            <WinBtns full />
          </div>
          <div className="flex items-center h-[27px] pl-[160px] gap-[3px] shrink-0">
            <Select v="ローソク(BID)" cls="w-[128px] h-[17px] justify-end gap-[20px]" />
            <div className="w-[80px] h-[17px] bg-white flex items-center text-[12px] text-[#999] pl-[14px] pr-[5px] gap-[12px] shrink-0">
              <span>/</span><span>/</span>
              <svg width="9" height="6" viewBox="0 0 9 6" className="ml-auto"><path d="M1 1l3.500 3.500L8 1" fill="none" stroke="#bbb" /></svg>
            </div>
            <Btn cls="w-[33px] h-[15px] ml-[2px] text-[#888]">検索</Btn>
          </div>
          <div className="flex h-[13px] pl-[207px] bg-white text-[12px] leading-[13px] text-[#333] shrink-0 whitespace-nowrap">
            <span className="w-[86px]">高値:160.263</span>
            <span className="w-[85px]">安値:160.210</span>
            <span>終値:160.222</span>
          </div>
          <div className="flex shrink-0">
            <div className="w-[213px] shrink-0" />
            <Chart />
          </div>
          <div className="flex items-center justify-end h-[22px] gap-[2px] pr-[6px] shrink-0 bg-[#2f5a85]">
            <div className="w-[10px] h-[15px] bg-white flex items-center">
              <svg width="9" height="6" viewBox="0 0 9 6"><path d="M1 1l3.500 3.500L8 1" fill="none" stroke="#777" /></svg>
            </div>
            <div className="w-[12px] h-[14px] ml-[2px] bg-[#0a3f7a] flex items-center justify-center text-white text-[11px] font-bold leading-none">+</div>
            <div className="w-[12px] h-[14px] bg-[#0a3f7a] flex items-center justify-center text-white text-[11px] font-bold leading-none">-</div>
            <div className="w-[14px] h-[15px] bg-white flex items-center justify-center">
              <svg width="10" height="12" viewBox="0 0 10 12"><rect x="1" y="5" width="8" height="6" fill="#222" /><path d="M3 5V3a2 2 0 0 1 4 0v2" fill="none" stroke="#222" /></svg>
            </div>
          </div>
        </div>
      </div>

      {/* news + calendar */}
      <div className="flex flex-1 min-h-0">
        <div className="w-[540px] flex flex-col shrink-0">
          <div className="flex items-center gap-[4px] h-[20px] pl-[4px] bg-gradient-to-r from-[#0f3d78] to-[#245a8c] text-[12.500px] text-[#d5e0ea] shrink-0">
            <PanelIcon />
            <span>ニュース</span>
          </div>
          <div className="flex items-center h-[23px] mt-[8px] pl-[7px] text-[12.500px] text-[#d5e0ea] shrink-0">
            <Check on /><span className="ml-[3px] w-[56px]">自動更新</span><Check /><span className="ml-[3px] w-[59px]">日付指定</span>
            <div className="w-[76px] h-[16px] bg-white text-[11px] text-[#888] pl-[5px]">2</div>
          </div>
          <div className="flex items-center h-[19px] pl-[7px] text-[10.500px] text-[#d5e0ea] shrink-0">
            <span className="w-[116px] whitespace-nowrap">26/06/16 14:08:22</span>
            <span className="w-[67px] text-[12.500px]">現在の情報</span>
            <Select v="1〜100件" cls="w-[87px] h-[18px]" />
          </div>
          <div className="flex ml-[8px] mt-[2px] overflow-hidden flex-1 min-h-0">
            <div className="w-[509px] shrink-0">
              <div className="grid grid-cols-[116px_90px_303px] h-[19px] bg-[#0a3f7a] text-[12.500px] text-[#dfe8f0]">
                <div className="flex items-center justify-center border-r border-[#3a7aa0]">日付</div>
                <div className="flex items-center justify-center border-r border-[#3a7aa0]">配信元</div>
                <div className="flex items-center justify-center">件名</div>
              </div>
              {news.map((n, i) => (
                <div key={n[0] + i} className={`grid grid-cols-[116px_90px_303px] h-[19.800px] items-center text-[10.500px] text-[#d0d0d0] whitespace-nowrap ${i % 2 ? 'bg-[#131313]' : 'bg-[#222]'}`}>
                  <span className="text-center">{n[0]}</span>
                  <span className="text-center">{n[1]}</span>
                  <span className="overflow-hidden pl-[1px]">{n[2]}</span>
                </div>
              ))}
            </div>
            <Scrollbar cls="w-[15px]" />
          </div>
        </div>
        <div className="flex-1 flex flex-col min-w-0">
          <div className="flex items-center justify-end h-[20px] pr-[5px] bg-gradient-to-r from-[#245a8c] to-[#3f6690] shrink-0">
            <WinBtns />
          </div>
          <div className="flex items-center h-[17px] mt-[25px] pl-[7px] text-[12px] shrink-0">
            <Btn cls="w-[65px] h-[17px]">◂ 前週</Btn>
            <Btn cls="w-[66px] h-[17px] ml-[7px]">本日</Btn>
            <Btn cls="w-[66px] h-[17px] ml-[7px]">翌週 ▸</Btn>
            <Btn cls="w-[66px] h-[17px] ml-[23px]">条件変更</Btn>
            <Btn cls="w-[66px] h-[17px] ml-[6px]">更新</Btn>
          </div>
          <div className="flex ml-[6px] mt-[10px] overflow-hidden flex-1 min-h-0">
            <div className="w-[637px] shrink-0">
              <div className="grid grid-cols-[63px_45px_278px_63px_63px_62px_63px] h-[20px] bg-[#0a3f7a] text-[12.500px] text-[#dfe8f0]">
                {['日付', '時刻', '指標内容', '重要度', '前回', '予想', '結果'].map((h) => (
                  <div key={h} className="flex items-center justify-center border-r border-[#3a7aa0]">{h}</div>
                ))}
              </div>
              {calendar.map((r, i) => (
                <div key={r[3]} className={`grid grid-cols-[63px_45px_278px_63px_63px_62px_63px] h-[28.700px] items-center text-[11.500px] text-[#cfcfcf] whitespace-nowrap ${i % 2 ? 'bg-[#131313]' : 'bg-[#222]'}`}>
                  <span className="text-center">{r[0]}</span>
                  <span className="text-center">{r[1]}</span>
                  <div className="flex items-center h-full">
                    <div className="w-[26px] ml-[5px] flex flex-col items-center h-full justify-center">
                      <Flag c={r[2]} />
                      <span className="text-[9px] leading-[9px] text-[#ddd]">{r[2]}</span>
                    </div>
                    <span className="ml-[11px] text-[12px]">{r[3]}</span>
                  </div>
                  <span className="text-center">{r[4]}</span>
                  <span className="text-center">{r[5]}</span>
                  <span className="text-center">{r[6]}</span>
                  <span className="text-center">{r[7]}</span>
                </div>
              ))}
            </div>
            <Scrollbar cls="w-[14px]" />
          </div>
        </div>
      </div>

      <DialogMedium />
      <DialogLarge />
      <DialogWide />

      {/* annotation overlays */}
      <div className="absolute left-[110px] top-[49px] w-[69px] h-[23px] border-[3px] border-[#e50012]" />
      <div className="absolute left-[126px] top-[93px] w-[95px] h-[37px] border-[3px] border-[#e50012]" />
      <svg className="absolute left-0 top-0 pointer-events-none" width="1200" height="914" viewBox="0 0 1200 914">
        <g stroke="#e50012" strokeWidth="4" fill="#e50012">
          <line x1="220" y1="103" x2="515" y2="150" />
          <path d="M537 154 L512 161 L516 140 Z" stroke="none" />
          <line x1="222" y1="126" x2="270" y2="170" />
          <path d="M284 183 L262 173 L273 161 Z" stroke="none" />
          <line x1="177" y1="130" x2="199" y2="558" />
          <path d="M201 577 L191 556 L210 555 Z" stroke="none" />
        </g>
      </svg>
    </div>
  );
}
